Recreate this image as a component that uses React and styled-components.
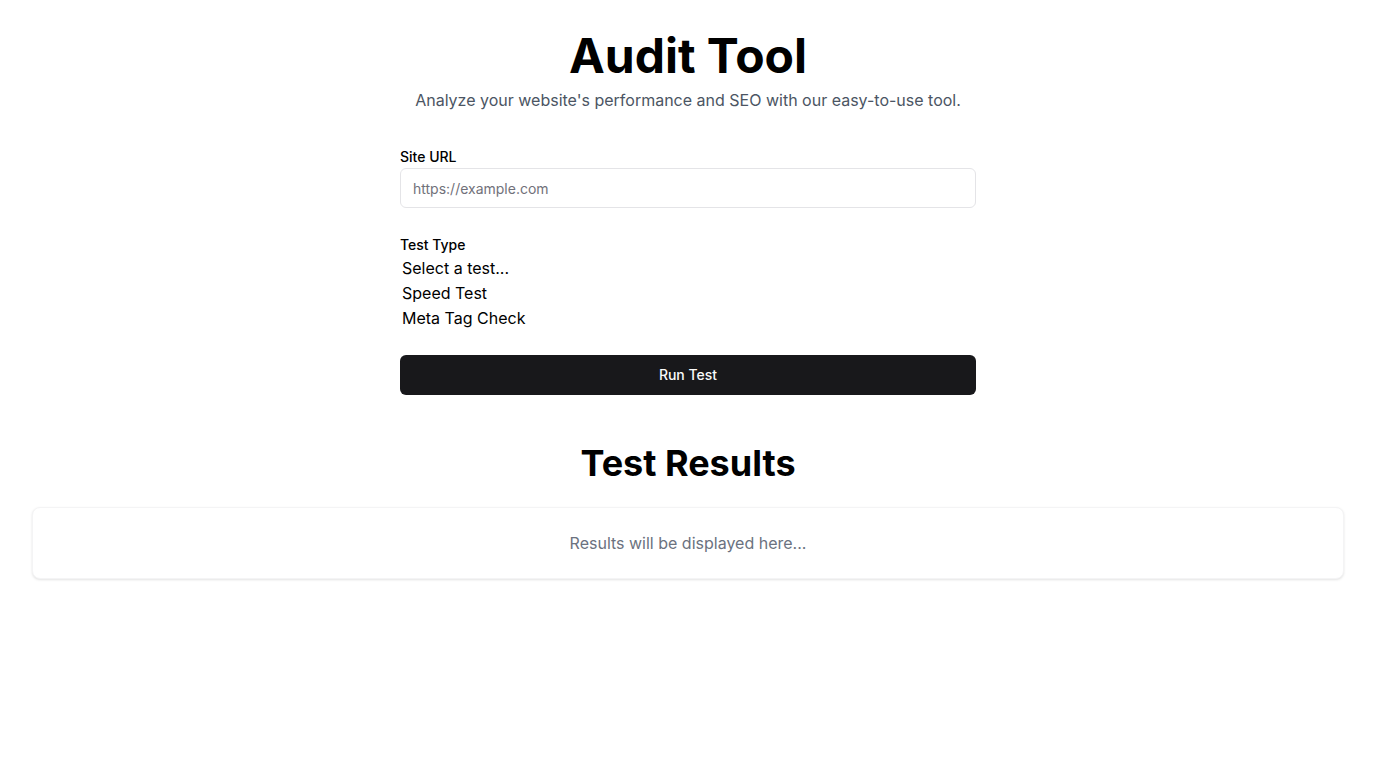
import React from "react";
import styled, { createGlobalStyle } from "styled-components";

const Global = createGlobalStyle`
  * { box-sizing: border-box; }
  body { margin: 0; background: #ffffff; font-family: Inter, "Noto Sans", sans-serif; color: #09090b; }
`;

const Page = styled.main`
  padding: 32px;
  display: flex;
  flex-direction: column;
  align-items: stretch;
`;

const Header = styled.header`
  text-align: center;
  margin-bottom: 34px;
`;

const Title = styled.h1`
  margin: 0 0 8px;
  font-size: 48px;
  line-height: 48px;
  font-weight: 700;
  color: #000;
`;

const Subtitle = styled.p`
  margin: 0;
  font-size: 16px;
  line-height: 24px;
  color: #4b5563;
`;

const Form = styled.form`
  width: 100%;
  max-width: 576px;
  margin: 0 auto;
  display: flex;
  flex-direction: column;
`;

const Field = styled.div`
  display: flex;
  flex-direction: column;
  gap: 1px;
  margin-bottom: ${(p) => p.$mb || 0}px;
`;

const Label = styled.label`
  padding-top: 1px;
  font-size: 14px;
  line-height: 20px;
  font-weight: 500;
  color: #000;
`;

const Input = styled.input`
  height: 40px;
  width: 100%;
  border: 1px solid #e4e4e7;
  border-radius: 6px;
  padding: 0 12px;
  font-family: inherit;
  font-size: 14px;
  color: #09090b;
  background: #fff;
  &::placeholder { color: #71717a; }
  outline: none;
`;

const Options = styled.div`
  display: flex;
  flex-direction: column;
  padding-left: 2px;
`;

const Option = styled.div`
  font-size: 16px;
  line-height: 25px;
  color: #000;
`;

const Button = styled.button`
  height: 40px;
  width: 100%;
  border: none;
  border-radius: 6px;
  background: #18181b;
  color: #fafafa;
  font-family: inherit;
  font-size: 14px;
  font-weight: 500;
  padding: 0 0 2px;
  cursor: pointer;
`;

const ResultsTitle = styled.h2`
  margin: 48px 0 24px;
  text-align: center;
  font-size: 36px;
  line-height: 40px;
  font-weight: 700;
  color: #000;
`;

const Card = styled.section`
  border: 1px solid #f4f4f5;
  border-radius: 8px;
  background: #fff;
  box-shadow: 0 1px 3px rgba(0, 0, 0, 0.08), 0 1px 2px rgba(0, 0, 0, 0.04);
  padding: 23px;
  text-align: center;
`;

const Placeholder = styled.p`
  margin: 0;
  font-size: 16px;
  line-height: 24px;
  color: #6b7280;
`;

export default function App() {
  return (
    <>
      <Global />
      <Page>
        <Header>
          <Title>Audit Tool</Title>
          <Subtitle>Analyze your website's performance and SEO with our easy-to-use tool.</Subtitle>
        </Header>
        <Form onSubmit={(e) => e.preventDefault()}>
          <Field $mb={26}>
            <Label htmlFor="url">Site URL</Label>
            <Input id="url" placeholder="https://example.com" />
          </Field>
          <Field $mb={24}>
            <Label>Test Type</Label>
            <Options>
              <Option>Select a test...</Option>
              <Option>Speed Test</Option>
              <Option>Meta Tag Check</Option>
            </Options>
          </Field>
          <Button type="submit">Run Test</Button>
        </Form>
        <ResultsTitle>Test Results</ResultsTitle>
        <Card>
          <Placeholder>Results will be displayed here...</Placeholder>
        </Card>
      </Page>
    </>
  );
}
